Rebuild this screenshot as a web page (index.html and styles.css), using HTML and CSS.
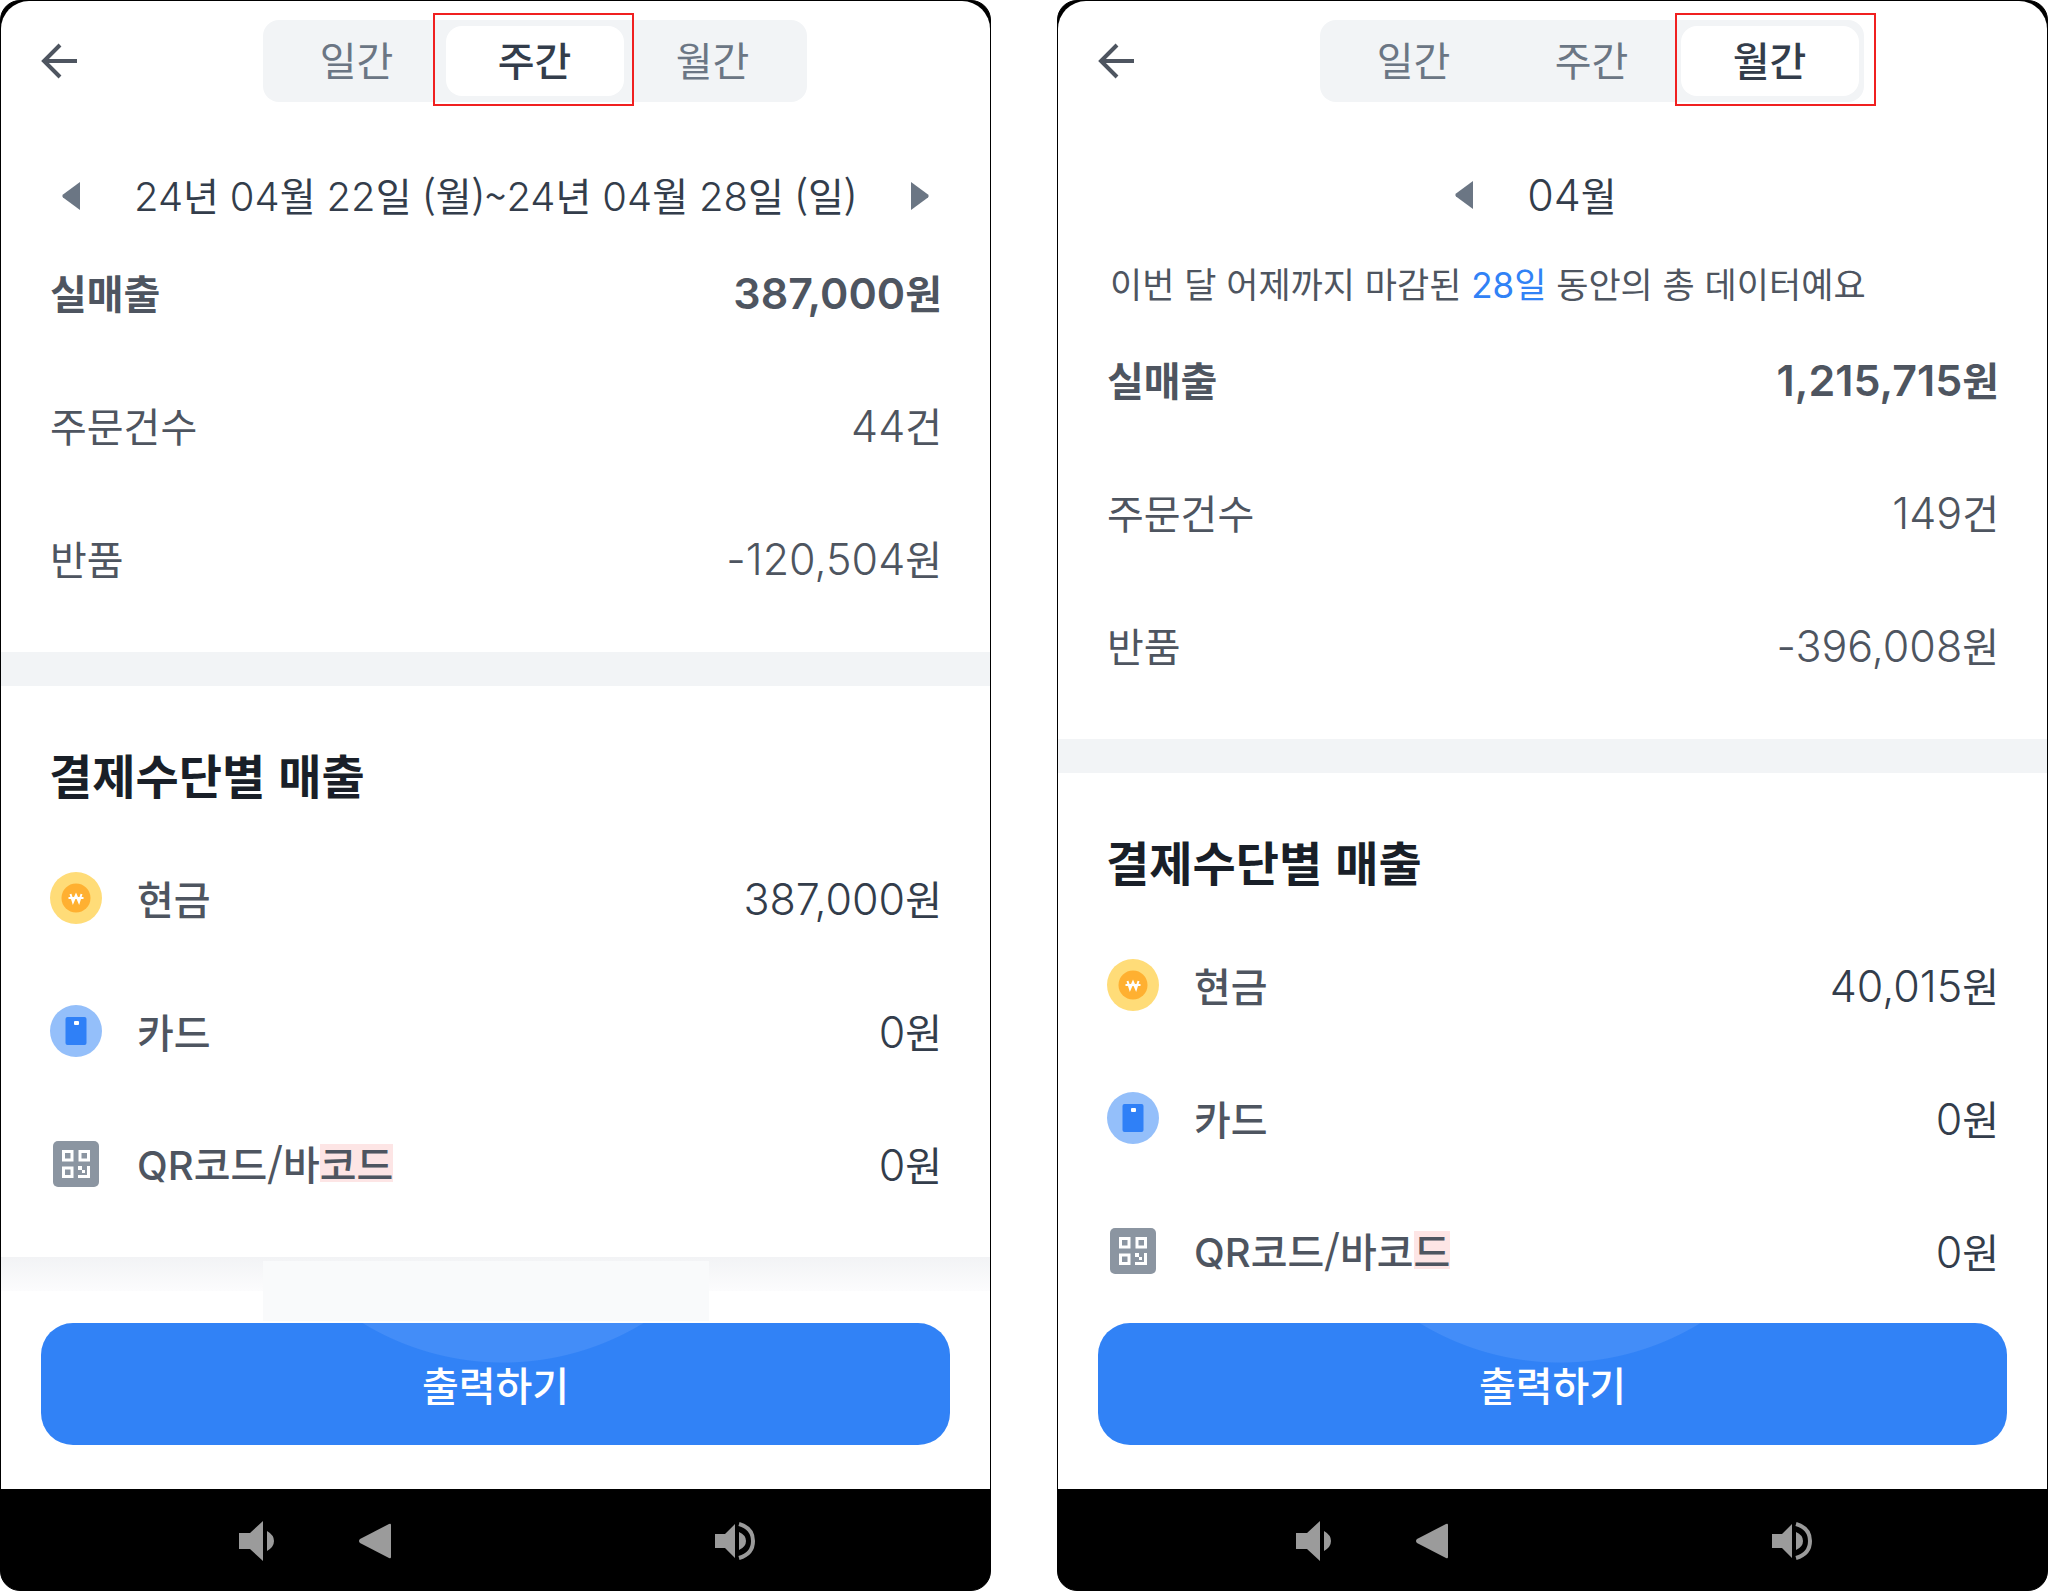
FILE: index.html
```html
<!DOCTYPE html>
<html lang="ko">
<head>
<meta charset="utf-8">
<title>매출 현황</title>
<link rel="stylesheet" href="styles.css">
</head>
<body>
<svg class="sprite" aria-hidden="true">
  <symbol id="i-back" viewBox="0 0 36 36"><path d="M19 2 3 18l16 16M3 18h33" fill="none" stroke="currentColor" stroke-width="4"/></symbol>
  <symbol id="i-prev" viewBox="0 0 20 30"><path d="M19 1v28L2 16.500q-1.500-1.500 0-3z" fill="currentColor"/></symbol>
  <symbol id="i-cash" viewBox="0 0 52 52"><circle cx="26" cy="26" r="26" fill="#ffdc78"/><circle cx="26" cy="26" r="14.500" fill="#ffb031"/><path d="M20.500 22l2.500 8 3-7 3 7 2.500-8M18.500 26h15" fill="none" stroke="#fff" stroke-width="2"/></symbol>
  <symbol id="i-card" viewBox="0 0 52 52"><circle cx="26" cy="26" r="26" fill="#94bffa"/><rect x="15.500" y="12" width="21" height="28" rx="2" fill="#2f80f7"/><rect x="24" y="16" width="5" height="4" rx="1" fill="#fff"/></symbol>
  <symbol id="i-qr" viewBox="0 0 52 52"><rect x="3" y="3" width="46" height="46" rx="5" fill="#8b95a1"/><g fill="none" stroke="#fff" stroke-width="3"><path d="M13.500 13.500h8.500v8.500h-8.500zM30 13.500h8.500v8.500h-8.500zM13.500 30h8.500v8.500h-8.500zM28 38.500h10.500V28"/></g><path d="M28 28h4v4h-4zM32 32h3v3h-3z" fill="#fff"/></symbol>
  <symbol id="i-low" viewBox="0 0 36 40"><path d="M0 12h11L24 0v40L11 28H0zM28 10q7 4 7 10t-7 10z" fill="#9b9b9b"/></symbol>
  <symbol id="i-home" viewBox="0 0 32 36"><path d="M32 2v32q0 2-2 1L1 20q-2-2 0-4L30 1q2-1 2 1z" fill="#9b9b9b"/></symbol>
  <symbol id="i-high" viewBox="0 0 40 38"><path d="M0 12h10L20 2v34L10 26H0zM24 10q7 3 7 9t-7 9z" fill="#9b9b9b"/><path d="M24 2q14 4 14 17T24 36" fill="none" stroke="#9b9b9b" stroke-width="4"/></symbol>
</svg>
<main class="screens">
  <section class="phone">
    <div class="screen">
      <header class="top">
        <button class="back" aria-label="뒤로"><svg><use href="#i-back"/></svg></button>
        <div class="tabs">
          <button class="tab">일간</button>
          <button class="tab tab-on">주간</button>
          <button class="tab">월간</button>
        </div>
      </header>
      <div class="period">
        <button class="step" aria-label="이전"><svg><use href="#i-prev"/></svg></button>
        <span class="date"><span class="digits">24</span>년 <span class="digits">04</span>월 <span class="digits">22</span>일 (월)~<span class="digits">24</span>년 <span class="digits">04</span>월 <span class="digits">28</span>일 (일)</span>
        <button class="step step-next" aria-label="다음"><svg><use href="#i-prev"/></svg></button>
      </div>
      <dl class="rows">
        <div class="row row-total"><dt>실매출</dt><dd><span class="num">387,000</span>원</dd></div>
        <div class="row"><dt>주문건수</dt><dd><span class="num">44</span>건</dd></div>
        <div class="row"><dt>반품</dt><dd><span class="num">-120,504</span>원</dd></div>
      </dl>
      <div class="divider"></div>
      <h2 class="title">결제수단별 매출</h2>
      <dl class="rows methods">
        <div class="row"><dt><svg><use href="#i-cash"/></svg>현금</dt><dd><span class="num">387,000</span>원</dd></div>
        <div class="row"><dt><svg><use href="#i-card"/></svg>카드</dt><dd><span class="num">0</span>원</dd></div>
        <div class="row"><dt><svg><use href="#i-qr"/></svg><span><span class="digits">QR</span>코드/바<span class="mark">코드</span></span></dt><dd><span class="num">0</span>원</dd></div>
      </dl>
      <div class="fade"></div>
    </div>
    <footer class="action"><button class="print">출력하기</button></footer>
    <nav class="system">
      <button class="key key-low" aria-label="볼륨 낮추기"><svg><use href="#i-low"/></svg></button>
      <button class="key key-home" aria-label="이전 화면"><svg><use href="#i-home"/></svg></button>
      <button class="key key-high" aria-label="볼륨 높이기"><svg><use href="#i-high"/></svg></button>
    </nav>
  </section>
  <section class="phone">
    <div class="screen">
      <header class="top">
        <button class="back" aria-label="뒤로"><svg><use href="#i-back"/></svg></button>
        <div class="tabs">
          <button class="tab">일간</button>
          <button class="tab">주간</button>
          <button class="tab tab-on tab-last">월간</button>
        </div>
      </header>
      <div class="period period-month">
        <button class="step" aria-label="이전"><svg><use href="#i-prev"/></svg></button>
        <span class="date"><span class="num">04</span>월</span>
      </div>
      <p class="note">이번 달 어제까지 마감된 <em><span class="digits">28</span>일</em> 동안의 총 데이터예요</p>
      <dl class="rows">
        <div class="row row-total"><dt>실매출</dt><dd><span class="num">1,215,715</span>원</dd></div>
        <div class="row"><dt>주문건수</dt><dd><span class="num">149</span>건</dd></div>
        <div class="row"><dt>반품</dt><dd><span class="num">-396,008</span>원</dd></div>
      </dl>
      <div class="divider"></div>
      <h2 class="title">결제수단별 매출</h2>
      <dl class="rows methods">
        <div class="row"><dt><svg><use href="#i-cash"/></svg>현금</dt><dd><span class="num">40,015</span>원</dd></div>
        <div class="row"><dt><svg><use href="#i-card"/></svg>카드</dt><dd><span class="num">0</span>원</dd></div>
        <div class="row"><dt><svg><use href="#i-qr"/></svg><span><span class="digits">QR</span>코드/바코<span class="mark">드</span></span></dt><dd><span class="num">0</span>원</dd></div>
      </dl>
    </div>
    <footer class="action"><button class="print">출력하기</button></footer>
    <nav class="system">
      <button class="key key-low" aria-label="볼륨 낮추기"><svg><use href="#i-low"/></svg></button>
      <button class="key key-home" aria-label="이전 화면"><svg><use href="#i-home"/></svg></button>
      <button class="key key-high" aria-label="볼륨 높이기"><svg><use href="#i-high"/></svg></button>
    </nav>
  </section>
</main>
</body>
</html>
```
FILE: styles.css
```css
* { box-sizing: border-box; }

body {
  margin: 0;
  background: #fff;
  color: #4e5560;
  font: 400 40px/60px "Noto Sans CJK KR", sans-serif;
}

button {
  margin: 0;
  padding: 0;
  border: 0;
  background: none;
  color: inherit;
  font: inherit;
}

svg { display: block; }
.sprite { position: absolute; width: 0; height: 0; }

.screens {
  display: grid;
  grid-template-columns: 1fr 1fr;
  gap: 66px;
  min-height: 100vh;
}

.phone {
  display: flex;
  flex-direction: column;
  overflow: hidden;
  border: 1px solid #000;
  border-radius: 20px;
  background: #000;
}

.screen {
  position: relative;
  flex: 1;
  border-radius: 28px 28px 0 0;
  background: #fff;
}

.top {
  display: grid;
  grid-template-columns: 78px 1fr;
  align-items: center;
  padding-top: 19px;
}

.back { padding-left: 40px; color: #4e5560; }
.back svg { width: 36px; height: 36px; }

.tabs {
  display: flex;
  justify-self: center;
  width: 544px;
  padding: 6px 5px;
  border-radius: 16px;
  background: #f2f4f6;
}

.tab {
  position: relative;
  flex: 1;
  height: 70px;
  padding-bottom: 5px;
  border-radius: 16px;
  color: #6b7684;
}

.tab-on { background: #fff; color: #333d4b; font-weight: 500; }

/* Callout frame over the selected tab */
.tab-on::after {
  content: "";
  position: absolute;
  inset: -13px -10px -10px -13px;
  border: 2px solid #f02020;
}

.tab-last::after { right: -17px; left: -6px; }

.period {
  display: flex;
  align-items: center;
  justify-content: center;
  gap: 53px;
  padding: 62px 0 35px;
  color: #333d4b;
}

.period-month { padding-right: 34px; padding-bottom: 28px; }
.period .date { font-size: 39px; }
.period .digits { font-size: 40px; font-weight: 300; }
.step { color: #6b7684; }
.step svg { width: 20px; height: 30px; }
.step-next svg { transform: scaleX(-1); }

.note { margin: 0 52px 34px; font-size: 35px; }
.note em { color: #3182f6; font-style: normal; }

.rows {
  display: grid;
  gap: 73px;
  margin: 0;
  padding: 0 48px 0 49px;
}

.row { display: flex; align-items: center; justify-content: space-between; height: 60px; }
.row-total { font-weight: 700; }
.row dt { display: flex; align-items: center; gap: 35px; }
.row dt svg { width: 52px; height: 52px; }
.row dd { margin: 0; }
.digits { font-family: Inter, sans-serif; }
.num { font-family: Inter, sans-serif; font-size: 43px; font-weight: 300; }
.row-total .num { font-weight: 600; }

.divider { height: 34px; margin: 64px 0 58px; background: #f2f4f6; }
.title { margin: 0 48px 64px; color: #191f28; font-size: 47px; font-weight: 700; }

.methods dt { font-weight: 500; }
.methods dd { color: #333d4b; }
.mark { background: linear-gradient(#fde5e5, #fde5e5) center / 100% 38px no-repeat; }

.fade {
  position: absolute;
  right: 0;
  bottom: 0;
  left: 0;
  height: 64px;
  background:
    linear-gradient(#f9fafb, #f9fafb) 262px bottom / 446px 60px no-repeat,
    linear-gradient(#f2f3f5, #fcfcfd) top / 100% 34px no-repeat;
}

.action { padding: 2px 40px 44px; background: #fff; }

.print {
  width: 100%;
  height: 122px;
  border-radius: 32px;
  background: radial-gradient(circle 270px at 462px -230px, #438df8 269px, #3182f6 270px);
  color: #fff;
  font-weight: 500;
}

.system { display: flex; align-items: center; height: 101px; padding: 3px 0 0 238px; }
.key-low svg { width: 36px; height: 40px; }
.key-home { margin-left: 84px; }
.key-home svg { width: 32px; height: 36px; }
.key-high { margin-left: 324px; }
.key-high svg { width: 40px; height: 38px; }
```
